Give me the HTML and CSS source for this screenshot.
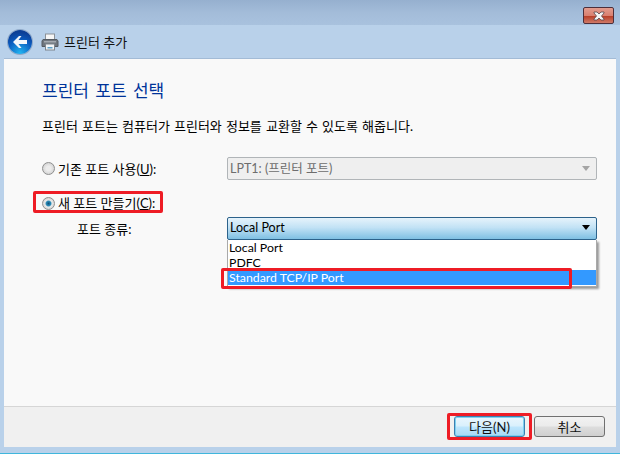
FILE: index.html
```html
<!DOCTYPE html>
<html lang="ko">
<head>
  <meta charset="UTF-8" />
  <title>프린터 추가</title>
  <link rel="stylesheet" href="styles.css">
</head>
<body>
  <div class="window">
    <div class="title-bar">
      <div class="close-btn">
        <svg width="12" height="10" viewBox="0 0 12 10"><path d="M1 1h3l2 2 2-2h3v1L8.500 5 11 8v1H8L6 7 4 9H1V8l2.500-3L1 2z" fill="#f4f4f4" stroke="#55484c" stroke-width="0.800"/></svg>
      </div>
    </div>

    <div class="nav-bar">
      <div class="back-btn">
        <svg width="16" height="14" viewBox="0 0 16 14"><path d="M7 1 1 7l6 6h2.500L6.500 9H15V5H6.500l3-4z" fill="#f2f6fb"/></svg>
      </div>
      <svg class="printer-icon" width="18" height="18" viewBox="0 0 18 18">
        <rect x="4.500" y="1" width="9" height="6" fill="#f6f6f6" stroke="#8b9198"/>
        <path d="M2 6.500h14l1 1.500v5.500H1V8z" fill="#6f767e" stroke="#555b62"/>
        <rect x="3" y="8" width="12" height="1.500" fill="#a3a9b0"/>
        <rect x="4.500" y="11" width="9" height="6" fill="#f2f5f7" stroke="#7f868d"/>
        <rect x="6.500" y="14" width="5" height="1.500" fill="#5aa0c8"/>
      </svg>
      <span class="nav-title">프린터 추가</span>
    </div>

    <div class="content">
      <div class="main">
        <h1 class="page-title">프린터 포트 선택</h1>
        <p class="desc">프린터 포트는 컴퓨터가 프린터와 정보를 교환할 수 있도록 해줍니다.</p>

        <div class="row row-existing">
          <div class="label-col">
            <span class="radio"></span>
            <span>기존 포트 사용(<u>U</u>):</span>
          </div>
          <div class="combo combo-disabled">
            <span>LPT1: (프린터 포트)</span>
            <span class="arrow arrow-grey"></span>
          </div>
        </div>

        <div class="row-new">
          <span class="radio radio-on"></span>
          <span>새 포트 만들기(<u>C</u>):</span>
          <div class="mark mark-new"></div>
        </div>

        <div class="row row-type">
          <div class="label-col type-label">포트 종류:</div>
          <div class="combo-wrap">
            <div class="combo combo-open">
              <span>Local Port</span>
              <span class="arrow"></span>
            </div>
            <ul class="drop-list">
              <li>Local Port</li>
              <li>PDFC</li>
              <li class="selected">Standard TCP/IP Port</li>
            </ul>
            <div class="mark mark-item"></div>
          </div>
        </div>
      </div>

      <div class="footer">
        <div class="btn-wrap">
          <button class="btn btn-default">다음(N)</button>
          <div class="mark mark-next"></div>
        </div>
        <button class="btn">취소</button>
      </div>
    </div>
  </div>
</body>
</html>
```

FILE: styles.css
```css
body {
  margin: 0;
  font-family: "Lato", "Noto Sans CJK KR", sans-serif;
  font-size: 13px;
  line-height: 18px;
  color: #000;
}

.window {
  width: 620px;
  height: 454px;
  display: flex;
  flex-direction: column;
  box-sizing: border-box;
  background: #b9d1ea;
  border-bottom: 1px solid #3fb6dc;
  overflow: hidden;
}

.title-bar {
  height: 25px;
  flex: none;
  display: flex;
  justify-content: flex-end;
  padding-right: 6px;
  box-sizing: border-box;
  background: linear-gradient(#96b0cf, #a3bcd9 50%, #a9c2de);
}

.close-btn {
  width: 31px;
  height: 17px;
  margin-top: 7px;
  box-sizing: border-box;
  border: 1px solid #4d2f3a;
  border-radius: 2px;
  display: flex;
  align-items: center;
  justify-content: center;
  background: linear-gradient(#e39c8e, #d98070 50%, #b93f28 55%, #cf7a68);
}

.nav-bar {
  height: 33px;
  flex: none;
  display: flex;
  align-items: center;
  padding-left: 8px;
  background: #b9d1ea;
}

.back-btn {
  width: 24px;
  height: 24px;
  border-radius: 50%;
  display: flex;
  align-items: center;
  justify-content: center;
  background: radial-gradient(circle at 50% 95%, #22b4f0, #0a5cc0 50%, #0c3f96 80%);
  box-shadow: 0 0 0 1px #8ea8c8;
}

.printer-icon {
  margin-left: 9px;
}

.nav-title {
  margin-left: 5px;
  color: #111;
}

.content {
  flex: 1;
  margin: 0 4px 6px;
  display: flex;
  flex-direction: column;
  background: #f9f9f9;
  border-top: 1px solid #a3bbd6;
}

.main {
  flex: 1;
  padding: 20px 19px 0 38px;
}

.page-title {
  margin: 0;
  font-size: 17px;
  font-weight: normal;
  word-spacing: 2px;
  line-height: 24px;
  color: #003399;
}

.desc {
  margin: 14px 0 0;
  word-spacing: 0.8px;
}

.row {
  display: flex;
  align-items: center;
}

.row-existing {
  margin-top: 22px;
}

.label-col {
  width: 185px;
  flex: none;
  display: flex;
  align-items: center;
  gap: 3px;
}

.radio {
  width: 11px;
  height: 11px;
  flex: none;
  border-radius: 50%;
  border: 1px solid #8e8f8f;
  background: radial-gradient(circle, #ececec 30%, #c6c6c6);
}

.radio-on {
  background: radial-gradient(circle, #0f4f78 0, #2b8cb8 30%, #e8e8e8 45%, #c6c6c6);
}

.combo {
  height: 23px;
  box-sizing: border-box;
  display: flex;
  align-items: center;
  justify-content: space-between;
  padding: 0 6px 0 2px;
  border-radius: 2px;
  font-size: 12.500px;
}

.combo-disabled {
  flex: 1;
  border: 1px solid #b1b5b8;
  background: #efefef;
  color: #6d6d6d;
}

.combo-wrap {
  flex: 1;
  position: relative;
}

.combo-open {
  padding-bottom: 2px;
  border: 1px solid #2c628b;
  background: linear-gradient(#e6f3fb, #c2e2f5 45%, #7fc0e3);
}

.arrow {
  width: 0;
  height: 0;
  border-left: 4px solid transparent;
  border-right: 4px solid transparent;
  border-top: 5px solid #000;
}

.arrow-grey {
  border-top-color: #a4a4a4;
}

.row-new {
  position: relative;
  display: flex;
  align-items: center;
  gap: 3px;
  margin-top: 14px;
  height: 18px;
}

.row-type {
  margin-top: 5px;
}

.type-label {
  padding-left: 35px;
  box-sizing: border-box;
}

.drop-list {
  position: absolute;
  top: 23px;
  left: 0;
  right: 0;
  margin: 0;
  padding: 0 0 1px;
  list-style: none;
  font-size: 12.300px;
  background: #fff;
  border: 1px solid #a9a9a9;
  border-top: none;
  box-shadow: 2px 2px 2px #9a9a9a;
}

.drop-list li {
  height: 15px;
  line-height: 15px;
  padding-left: 1px;
}

.drop-list .selected {
  background: #3399ff;
  color: #fff;
}

.mark {
  position: absolute;
  border: 3px solid #ee1c25;
  border-radius: 2px;
  box-sizing: border-box;
}

.mark-new {
  left: -9px;
  top: -3px;
  width: 130px;
  height: 22px;
}

.mark-item {
  left: -6px;
  top: 51px;
  width: 351px;
  height: 21px;
}

.footer {
  height: 41px;
  flex: none;
  display: flex;
  justify-content: flex-end;
  align-items: flex-start;
  gap: 9px;
  padding: 9px 11px 0 0;
  box-sizing: border-box;
  background: #f0f0f0;
  border-top: 1px solid #d6d6d6;
}

.btn-wrap {
  position: relative;
}

.btn {
  display: block;
  width: 71px;
  height: 21px;
  padding: 0;
  font: inherit;
  color: #111;
  border: 1px solid #707070;
  border-radius: 3px;
  background: linear-gradient(#f2f2f2, #ebebeb 48%, #dddddd 52%, #cfcfcf);
}

.btn-default {
  border-color: #3c7fb1;
  box-shadow: inset 0 0 0 1px #7fd0ef;
  background: linear-gradient(#eaf6fd, #d9f0fc 48%, #bee6fd 52%, #a7d9f5);
}

.mark-next {
  left: -7px;
  top: -3px;
  width: 85px;
  height: 27px;
}
```
